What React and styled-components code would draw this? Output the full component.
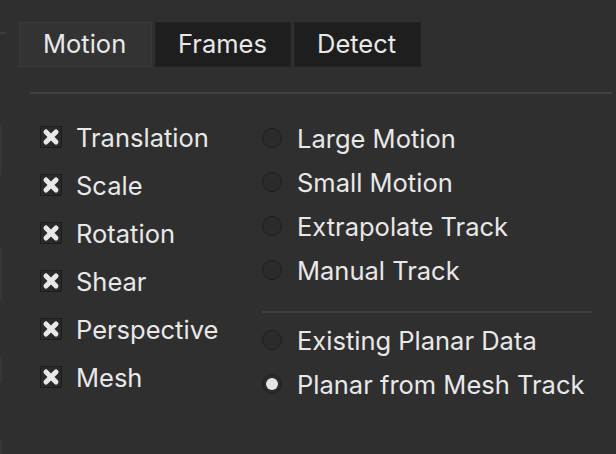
import React, { useState } from 'react';
import styled, { createGlobalStyle } from 'styled-components';

const GlobalStyle = createGlobalStyle`
  html, body {
    margin: 0;
    padding: 0;
    background: #2f2f2f;
  }
  body {
    font-family: Inter, "Noto Sans", "Liberation Sans", sans-serif;
    color: #e8e8e8;
  }
`;

const Page = styled.div`
  display: flex;
  width: 616px;
  height: 454px;
  overflow: hidden;
  background: #2f2f2f;
`;

const Edge = styled.div`
  width: 6px;
  display: flex;
  flex-direction: column;
  flex-shrink: 0;
`;

const EdgeTick = styled.div`
  width: 6px;
  height: 2px;
  margin-top: 32px;
  background: #3c3c3c;
`;

const EdgeBar = styled.div`
  width: 2px;
  height: ${(p) => p.$h}px;
  margin-top: ${(p) => p.$top}px;
  background: #363636;
`;

const Panel = styled.div`
  flex: 1;
  padding: 22px 4px 0 13px;
  display: flex;
  flex-direction: column;
`;

const TabBar = styled.div`
  display: flex;
  gap: 3px;
  height: 45px;
`;

const Tab = styled.div`
  display: flex;
  align-items: center;
  padding: 0 0 2px ${(p) => (p.$active ? 23 : 22)}px;
  width: ${(p) => p.$w}px;
  box-sizing: border-box;
  font-size: 25.5px;
  color: #e8e8e8;
  background: ${(p) => (p.$active ? '#333333' : '#1e1e1e')};
  border: 1px solid ${(p) => (p.$active ? '#3a3a3a' : '#232323')};
  cursor: pointer;
`;

const Divider = styled.div`
  height: 2px;
  background: #404040;
  margin: ${(p) => p.$m};
`;

const Columns = styled.div`
  display: flex;
  padding-left: 21px;
  margin-top: 19px;
`;

const LeftCol = styled.div`
  width: 222px;
  display: flex;
  flex-direction: column;
`;

const RightCol = styled.div`
  width: 330px;
  display: flex;
  flex-direction: column;
  margin-top: 3px;
`;

const CheckRow = styled.label`
  display: flex;
  align-items: center;
  gap: 14px;
  height: 48px;
  font-size: 25.5px;
  cursor: pointer;
`;

const Box = styled.span`
  width: 22px;
  height: 22px;
  box-sizing: border-box;
  border: 1px solid #1c1c1c;
  background: #2a2a2a;
  display: flex;
  align-items: center;
  justify-content: center;
  flex-shrink: 0;
`;

const RadioRow = styled.label`
  display: flex;
  align-items: center;
  gap: 15px;
  height: 44px;
  font-size: 25.5px;
  cursor: pointer;
`;

const Ring = styled.span`
  width: 20px;
  height: 20px;
  box-sizing: border-box;
  border-radius: 50%;
  border: 1px solid #1e1e1e;
  background: #2b2b2b;
  display: flex;
  align-items: center;
  justify-content: center;
  flex-shrink: 0;
  &::after {
    content: '';
    display: ${(p) => (p.$on ? 'block' : 'none')};
    width: 12px;
    height: 12px;
    border-radius: 50%;
    background: #e4e4e4;
  }
`;

const Cross = () => (
  <svg width="18" height="18" viewBox="0 0 18 18">
    <path d="M4 4 L14 14 M14 4 L4 14" stroke="#e8e8e8" strokeWidth="5" strokeLinecap="round" />
  </svg>
);

const checks = ['Translation', 'Scale', 'Rotation', 'Shear', 'Perspective', 'Mesh'];
const tracks = ['Large Motion', 'Small Motion', 'Extrapolate Track', 'Manual Track'];
const planars = ['Existing Planar Data', 'Planar from Mesh Track'];

export default function App() {
  const [tab, setTab] = useState('Motion');
  const [track, setTrack] = useState(null);
  const [planar, setPlanar] = useState('Planar from Mesh Track');

  const tabs = [
    { name: 'Motion', w: 133 },
    { name: 'Frames', w: 136 },
    { name: 'Detect', w: 127 },
  ];

  return (
    <>
      <GlobalStyle />
      <Page>
        <Edge>
          <EdgeTick />
          <EdgeBar $top={90} $h={52} />
          <EdgeBar $top={72} $h={54} />
          <EdgeBar $top={56} $h={26} />
          <EdgeBar $top={58} $h={14} />
        </Edge>
        <Panel>
          <TabBar>
            {tabs.map((t) => (
              <Tab key={t.name} $w={t.w} $active={tab === t.name} onClick={() => setTab(t.name)}>
                {t.name}
              </Tab>
            ))}
          </TabBar>
          <Divider $m="25px 0 0 11px" />
          <Columns>
            <LeftCol>
              {checks.map((c) => (
                <CheckRow key={c}>
                  <Box>
                    <Cross />
                  </Box>
                  {c}
                </CheckRow>
              ))}
            </LeftCol>
            <RightCol>
              {tracks.map((t) => (
                <RadioRow key={t} onClick={() => setTrack(t)}>
                  <Ring $on={track === t} />
                  {t}
                </RadioRow>
              ))}
              <Divider $m="19px 0 5px 0" />
              {planars.map((t) => (
                <RadioRow key={t} onClick={() => setPlanar(t)}>
                  <Ring $on={planar === t} />
                  {t}
                </RadioRow>
              ))}
            </RightCol>
          </Columns>
        </Panel>
      </Page>
    </>
  );
}
